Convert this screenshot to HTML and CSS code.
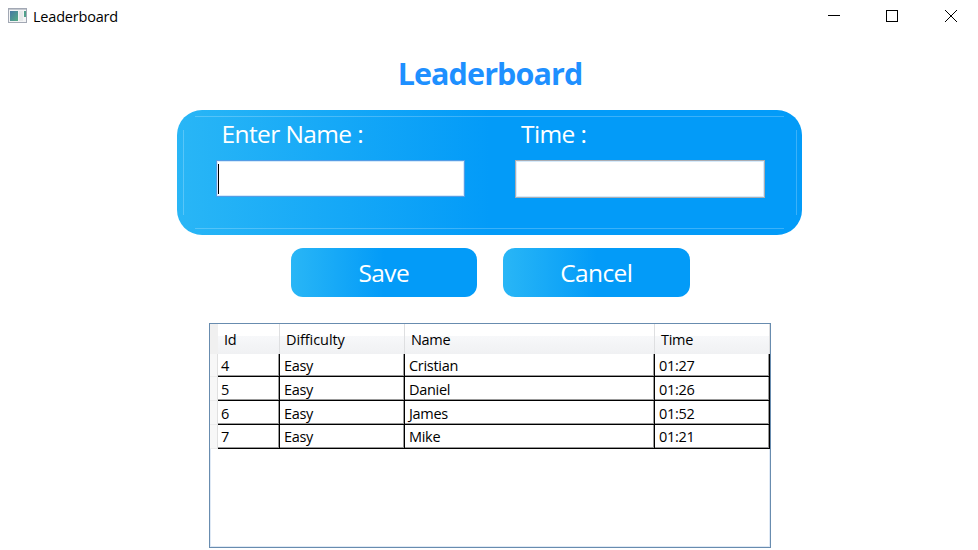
FILE: index.html
```html
<!DOCTYPE html>
<html lang="en">
<head>
<meta charset="utf-8">
<title>Leaderboard</title>
<link rel="stylesheet" href="styles.css">
</head>
<body>
<header class="titlebar">
  <svg class="app-icon" width="20" height="17" viewBox="0 0 20 17">
    <defs><linearGradient id="pane" x1="0" y1="0" x2="1" y2="1"><stop offset="0" stop-color="#4577a4"/><stop offset="1" stop-color="#55ad83"/></linearGradient></defs>
    <rect x=".5" y=".5" width="18" height="14" fill="#f3f4f5" stroke="#a2a8b4"/>
    <path d="M1 1.5h17" stroke="#c4c8cf"/>
    <rect x="2" y="3" width="8" height="10" fill="url(#pane)"/>
    <rect x="11" y="3" width="4" height="10" fill="#e6e8e9"/>
    <rect x="16" y="3" width="2" height="6" fill="#50a08a"/>
  </svg>
  <span class="caption">Leaderboard</span>
  <svg class="controls" width="150" height="33" viewBox="0 0 150 33" fill="none" stroke="#000" shape-rendering="crispEdges">
    <path d="M10 15.5h12"/>
    <rect x="68.500" y="10.500" width="11" height="11"/>
    <path d="M127 10l12 12M139 10l-12 12" shape-rendering="auto"/>
  </svg>
</header>
<main>
  <h1>Leaderboard</h1>
  <section class="panel">
    <svg class="inset" width="625" height="125" viewBox="0 0 625 125" fill="none" stroke="#fff" stroke-opacity=".22"><path d="M18 6.500h589M18 118.500h589M6.500 20v85M619.500 20v85"/></svg>
    <label class="field name"><span>Enter Name :</span><span class="input focused"><i class="caret"></i></span></label>
    <label class="field time"><span>Time :</span><span class="input"></span></label>
  </section>
  <div class="actions">
    <button class="save">Save</button>
    <button class="cancel">Cancel</button>
  </div>
  <div class="grid">
    <div class="row head"><b></b><span>Id</span><span class="difficulty">Difficulty</span><span>Name</span><span>Time</span></div>
    <div class="row first"><b></b><span>4</span><span>Easy</span><span class="cristian">Cristian</span><span>01:27</span></div>
    <div class="row"><b></b><span>5</span><span>Easy</span><span>Daniel</span><span>01:26</span></div>
    <div class="row"><b></b><span>6</span><span>Easy</span><span>James</span><span>01:52</span></div>
    <div class="row last"><b></b><span>7</span><span>Easy</span><span>Mike</span><span>01:21</span></div>
  </div>
</main>
</body>
</html>
```
FILE: styles.css
```css
* { box-sizing: border-box; }
body {
  margin: 0;
  width: 978px;
  height: 550px;
  overflow: hidden;
  background: #fff;
  color: #000;
  font-family: "Open Sans", "Noto Sans", sans-serif;
}
.titlebar { display: flex; height: 33px; padding-left: 8px; }
.app-icon { margin-top: 8px; }
.caption { margin-left: 5px; font-size: 14.5px; line-height: 33px; letter-spacing: -.2px; }
.controls { margin-left: auto; margin-right: 10px; }
main { display: flex; flex-direction: column; align-items: center; padding-left: 2px; }
h1 { margin: 0; height: 77px; font-size: 30.5px; line-height: 80px; color: #1e90ff; letter-spacing: -.9px; }
.panel, button { background: linear-gradient(90deg, #29b6f6, #039bf8 50%); color: #fff; }
.panel { position: relative; display: flex; width: 625px; height: 125px; margin-right: 1px; border-radius: 25px; padding-left: 38.5px; }
.inset { position: absolute; left: 0; top: 0; }
.field { display: flex; flex-direction: column; font-size: 24.5px; }
.field > span:first-child { height: 50px; line-height: 48px; padding-left: 6px; letter-spacing: -.6px; white-space: nowrap; }
.name { width: 299.5px; }
.input { display: block; width: 250px; height: 38px; background: #fff; border: 1px solid #abadb3; box-shadow: inset 0 0 0 1px #d5eafb; }
.focused { width: 249px; height: 37px; border-color: #569de5; }
.caret { display: block; width: 1px; height: 30px; margin: 3px 0 0 1px; background: #000; }
.actions { display: flex; gap: 26px; margin-top: 13px; }
button { width: 186.500px; height: 49px; border: 0; border-radius: 12px; padding: 0; font: 24.5px/50px "Open Sans", sans-serif; letter-spacing: -.6px; }
.grid { width: 562px; height: 225px; margin-top: 26px; border: 1px solid #688caf; box-shadow: inset 0 0 0 1px #dfe9f5; font-size: 14.5px; letter-spacing: -.3px; }
.row { display: grid; grid-template-columns: 8px 62px 125px 250px 115px; height: 24px; line-height: 21px; }
.row b { background: #f7f7f7; border-right: 1px solid #e0e0e0; border-bottom: 1px solid #ececec; }
.row span { padding: 2px 0 0 4px; background: #fff; border-right: 1px solid #000; border-bottom: 1px solid #000; box-shadow: inset -1px -1px #999; }
.row b + span { padding-left: 3px; }
.row.first { height: 23px; }
.first span { padding-top: 1px; }
.row.head { height: 30px; line-height: 29px; }
.row.head span { padding: 1px 0 0 6px; background: linear-gradient(#fff 0 40%, #f7f8fa 40%, #f0f1f3); border-right: 1px solid #dedfe1; border-bottom: 1px solid #d5d5d5; box-shadow: none; }
.head b { background: #f0f0f0; border-right: 0; }
.row.head .difficulty { letter-spacing: -.08px; }
.last { line-height: 22px; }
.last span { padding-top: 1px; }
```
